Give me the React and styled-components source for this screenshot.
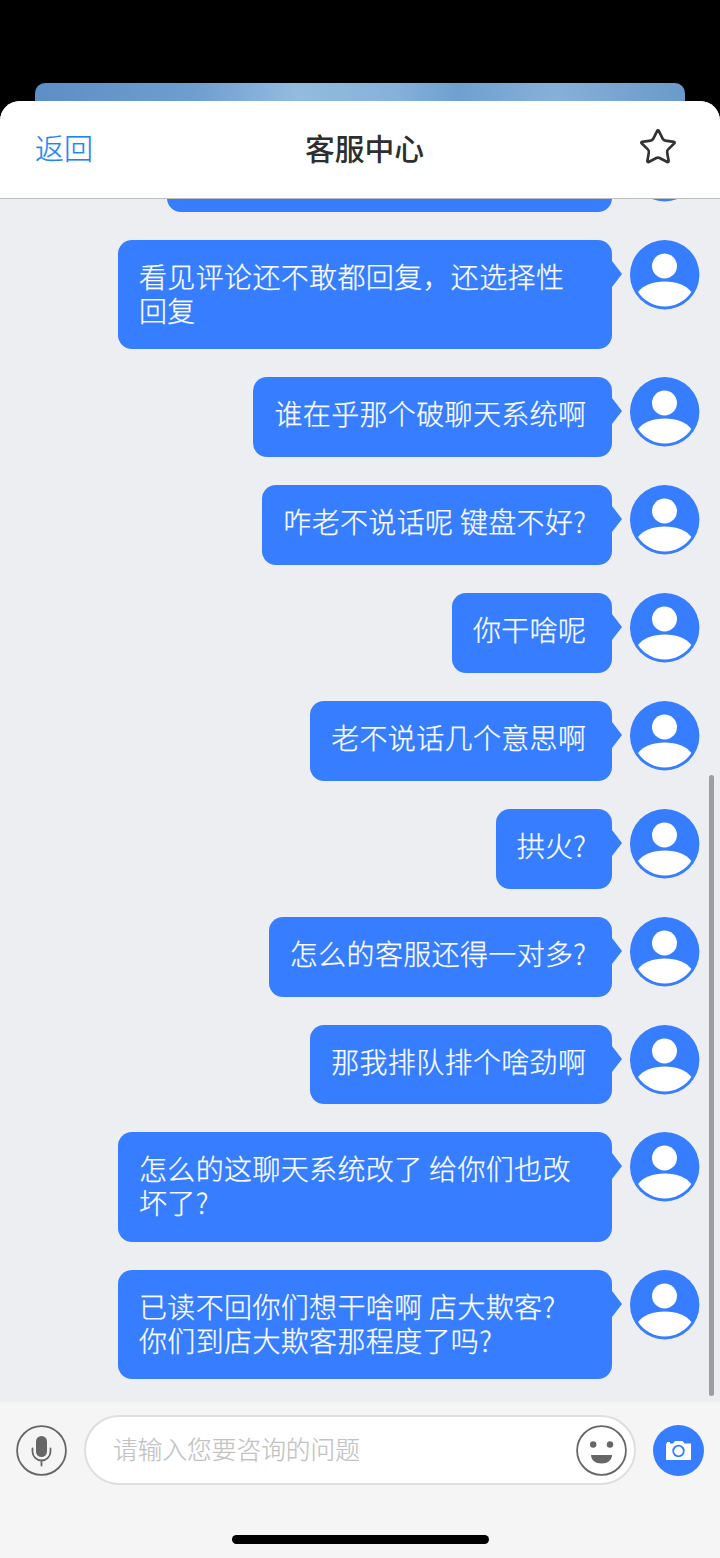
import styled, { createGlobalStyle } from "styled-components";
import { Star } from "lucide-react";

const GlobalStyle = createGlobalStyle`
  html, body {
    margin: 0;
    padding: 0;
    background: #000;
  }
  * {
    box-sizing: border-box;
  }
`;

const Page = styled.div`
  width: 720px;
  height: 1558px;
  display: flex;
  flex-direction: column;
  overflow: hidden;
  background: #000;
  font-family: "Noto Sans CJK SC", "Noto Sans", sans-serif;
`;

const TopGap = styled.div`
  flex: none;
  height: 101px;
  padding: 83px 35px 0;
`;

const BehindCard = styled.div`
  height: 18px;
  border-radius: 10px 10px 0 0;
  background: linear-gradient(
    90deg,
    #5c8fc6 0%,
    #6f9ed0 25%,
    #93bbdf 40%,
    #86b2da 55%,
    #6fa0d0 65%,
    #86b0d8 80%,
    #6a9ac9 100%
  );
`;

const Sheet = styled.div`
  flex: 1;
  display: flex;
  flex-direction: column;
  min-height: 0;
  border-radius: 20px 20px 0 0;
  overflow: hidden;
  background: #eceef1;
`;

const Header = styled.header`
  flex: none;
  height: 98px;
  display: flex;
  align-items: center;
  justify-content: space-between;
  padding: 0 42px 6px 35px;
  background: #fff;
  border-bottom: 1px solid #bdbdbd;
  position: relative;
  z-index: 1;
`;

const BackLink = styled.span`
  font-size: 29px;
  font-weight: 300;
  color: #1f86f0;
  -webkit-text-stroke: 0.25px #1f86f0;
`;

const Title = styled.h1`
  margin: 0 2px 0 0;
  font-size: 29.8px;
  font-weight: 500;
  color: #2e2e2e;
`;

const FavStar = styled(Star)`
  margin-top: 1px;
`;

const ChatArea = styled.main`
  flex: none;
  height: 1203px;
  position: relative;
  display: flex;
  flex-direction: column;
  justify-content: flex-end;
  gap: 28px;
  padding: 0 20px 23px 0;
  overflow: hidden;
`;

const MessageRow = styled.div`
  flex: none;
  display: flex;
  justify-content: flex-end;
  align-items: flex-start;
  gap: 18px;
`;

const Bubble = styled.div`
  position: relative;
  max-width: 494px;
  min-width: ${(props) => props.$minWidth || 0}px;
  min-height: 79.9px;
  padding: 19px 25.7px 22.3px 21px;
  border-radius: 14px;
  background: #367eff;
  color: #fff;
  font-size: 28px;
  font-weight: 300;
  line-height: 34px;
  letter-spacing: 0.35px;
  white-space: pre-line;
  -webkit-text-stroke: 0.25px #fff;
  &::after {
    content: "";
    position: absolute;
    top: 21px;
    right: -10px;
    border-left: 10px solid #367eff;
    border-top: 13px solid transparent;
    border-bottom: 13px solid transparent;
  }
`;

const ScrollThumb = styled.div`
  position: absolute;
  top: 576px;
  right: 6px;
  width: 5px;
  height: 621px;
  border-radius: 3px;
  background: #9c9ea1;
`;

const Footer = styled.footer`
  flex: none;
  height: 156px;
  display: flex;
  flex-direction: column;
  align-items: center;
  padding-top: 13px;
  background: #f5f5f5;
`;

const InputRow = styled.div`
  width: 100%;
  display: flex;
  align-items: center;
  padding: 0 16px;
`;

const InputBox = styled.div`
  flex: none;
  width: 552px;
  height: 70px;
  margin: 0 17px;
  padding: 0 7px 4px 27px;
  display: flex;
  align-items: center;
  justify-content: space-between;
  border: 2px solid #dedede;
  border-radius: 35px;
  background: #fff;
`;

const Placeholder = styled.span`
  font-size: 24.7px;
  font-weight: 300;
  color: #c2c2c2;
  -webkit-text-stroke: 0.2px #c2c2c2;
`;

const RoundIcon = styled.svg`
  flex: none;
  display: block;
  width: ${(props) => props.$size || 51}px;
  height: ${(props) => props.$size || 51}px;
`;

const SmileWrap = styled.div`
  flex: none;
  margin-bottom: -4px;
`;

const HomeBar = styled.div`
  width: 257px;
  height: 9px;
  margin-top: 50px;
  border-radius: 5px;
  background: #000;
`;

const Avatar = () => (
  <RoundIcon $size={70} viewBox="0 0 70 70">
    <circle cx="34.7" cy="34.7" r="34.7" fill="#367eff" />
    <circle cx="34.5" cy="26" r="12.5" fill="#fff" />
    <path
      d="M8 52C13 45.500 23 41.500 34.700 41.500S56.400 45.500 61.400 52A31.900 31.900 0 0 1 8 52Z"
      fill="#fff"
    />
  </RoundIcon>
);

const MicIcon = () => (
  <RoundIcon viewBox="0 0 51 51">
    <circle cx="25.5" cy="25.5" r="24.4" fill="none" stroke="#666" strokeWidth="1.8" />
    <rect x="20" y="11" width="11" height="21" rx="5.5" fill="#666" />
    <path
      d="M16.5 23.5v3a9 9 0 0 0 18 0v-3M25.5 35.500v5"
      fill="none"
      stroke="#666"
      strokeWidth="1.8"
      strokeLinecap="round"
    />
  </RoundIcon>
);

const SmileIcon = () => (
  <RoundIcon viewBox="0 0 51 51">
    <circle cx="25.5" cy="25.5" r="24.4" fill="#fff" stroke="#666" strokeWidth="1.8" />
    <circle cx="17.2" cy="19.5" r="3.2" fill="#666" />
    <circle cx="34" cy="19.5" r="3.2" fill="#666" />
    <path d="M15 30h21c0 5-4.500 8.500-10.500 8.500S15 35 15 30Z" fill="#666" />
  </RoundIcon>
);

const CameraIcon = () => (
  <RoundIcon viewBox="0 0 51 51">
    <circle cx="25.5" cy="25.5" r="25.500" fill="#367eff" />
    <path d="M13 18.500h1v-1.500h3v1.500h3l2-2.500h7.500l2 2.500h6.500v16.500H13Z" fill="#fff" />
    <circle cx="25.500" cy="26" r="5.300" fill="#fff" stroke="#367eff" strokeWidth="1.800" />
  </RoundIcon>
);

const messages = [
  { text: "看见评论还不敢都回复，还选择性回复" },
  { text: "谁在乎那个破聊天系统啊" },
  { text: "咋老不说话呢 键盘不好?" },
  { text: "你干啥呢" },
  { text: "老不说话几个意思啊" },
  { text: "拱火?" },
  { text: "怎么的客服还得一对多?" },
  { text: "那我排队排个啥劲啊" },
  { text: "怎么的这聊天系统改了 给你们也改坏了?" },
  { text: "已读不回你们想干啥啊 店大欺客?\n你们到店大欺客那程度了吗?", minWidth: 494 },
];

const App = () => {
  return (
    <Page>
      <GlobalStyle />
      <TopGap>
        <BehindCard />
      </TopGap>
      <Sheet>
        <Header>
          <BackLink>返回</BackLink>
          <Title>客服中心</Title>
          <FavStar size={40} color="#333" strokeWidth={1.6} />
        </Header>
        <ChatArea>
          {/* this one has scrolled under the header, only its bottom edge shows */}
          <MessageRow>
            <Bubble $minWidth={445} />
            <Avatar />
          </MessageRow>
          {messages.map((message) => (
            <MessageRow key={message.text}>
              <Bubble $minWidth={message.minWidth}>{message.text}</Bubble>
              <Avatar />
            </MessageRow>
          ))}
          <ScrollThumb />
        </ChatArea>
        <Footer>
          <InputRow>
            <MicIcon />
            <InputBox>
              <Placeholder>请输入您要咨询的问题</Placeholder>
              <SmileWrap>
                <SmileIcon />
              </SmileWrap>
            </InputBox>
            <CameraIcon />
          </InputRow>
          <HomeBar />
        </Footer>
      </Sheet>
    </Page>
  );
};

export default App;
